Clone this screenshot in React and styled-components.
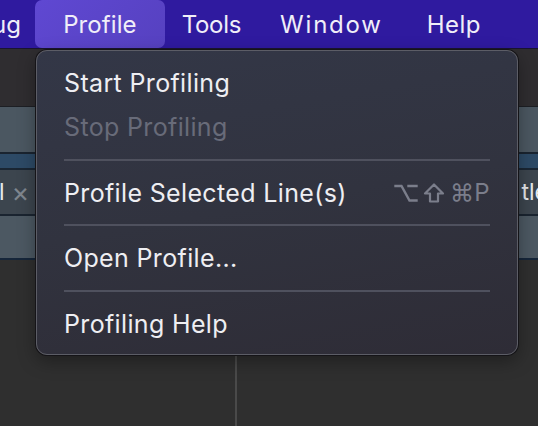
import React from "react";
import styled, { createGlobalStyle } from "styled-components";

const Global = createGlobalStyle`
  html, body { margin: 0; padding: 0; background: #2f2f2f; }
  body { width: 538px; height: 426px; overflow: hidden; font-family: Inter, "Noto Sans", sans-serif; -webkit-font-smoothing: antialiased; }
`;

const Screen = styled.div`
  position: relative;
  width: 538px;
  height: 426px;
  overflow: hidden;
  display: flex;
  flex-direction: column;
  background: #2f2f2f;
`;

const MenuBar = styled.div`
  height: 48px;
  flex: none;
  background: #2f1a9f;
  display: flex;
  align-items: stretch;
  border-bottom: 1px solid #1a1530;
`;

const MenuTitle = styled.div`
  display: flex;
  align-items: center;
  margin-right: ${p => p.$gap}px;
  padding: 0 ${p => (p.$active ? 28 : 0)}px;
  border-radius: 7px;
  background: ${p => (p.$active ? "linear-gradient(135deg, #5f48d2, #5641c0)" : "transparent")};
  color: #f0eef8;
  font-size: 24px;
  letter-spacing: ${p => p.$ls || 0.1}px;
  white-space: nowrap;
`;

const Toolbar = styled.div`
  height: 57px;
  flex: none;
  background: #2f2d30;
  border-bottom: 1px solid #1d1f24;
`;

const Band = styled.div`
  height: ${p => p.$h}px;
  flex: none;
  background: ${p => p.$bg};
  border-bottom: ${p => p.$line}px solid ${p => p.$lc || "#1a2430"};
  display: flex;
  align-items: center;
  justify-content: space-between;
  color: #e6e8ec;
  font-size: 23px;
`;

const TabEnd = styled.span`
  display: flex;
  align-items: center;
  gap: 7px;
  margin-left: -1px;
`;

const Close = styled.span`
  color: #7f868e;
  font-size: 27px;
`;

const TabStart = styled.span`
  margin-right: -10px;
`;

const Lower = styled.div`
  flex: 1;
  display: flex;
`;

const Pane = styled.div`
  width: ${p => p.$w}px;
  border-right: ${p => (p.$divider ? "2px solid #4a4a4a" : "none")};
  flex: ${p => (p.$w ? "none" : 1)};
`;

const Menu = styled.div`
  position: absolute;
  left: 36px;
  top: 50px;
  width: 482px;
  height: 305px;
  box-sizing: border-box;
  border-radius: 11px;
  background: linear-gradient(170deg, #333747 0%, #31333f 50%, #2e2c36 100%);
  border: 1.5px solid #5c5d66;
  box-shadow: 0 0 0 1px #151418, 0 6px 18px rgba(0, 0, 0, 0.35);
  padding: 10px 27px 8px 27px;
  display: flex;
  flex-direction: column;
`;

const Item = styled.div`
  height: 45px;
  display: flex;
  align-items: center;
  justify-content: space-between;
  color: ${p => (p.$disabled ? "#686b79" : "#eeeef2")};
  font-size: 25px;
  letter-spacing: 0.35px;
  white-space: nowrap;
`;

const Shortcut = styled.span`
  color: #7b7e8b;
  font-size: 24px;
  display: flex;
  align-items: center;
  gap: 5px;
`;

const Separator = styled.div`
  height: 2px;
  background: #4f515e;
  margin: 10px 0 10px;
`;

const ShiftIcon = () => (
  <svg width="22" height="22" viewBox="0 0 22 22" fill="none" stroke="#7b7e8b" strokeWidth="2.2" strokeLinejoin="round">
    <path d="M11 2.5 L20 11.5 H15 V19.5 H7 V11.5 H2 Z" />
  </svg>
);

const OptionIcon = () => (
  <svg width="24" height="22" viewBox="0 0 24 22" fill="none" stroke="#7b7e8b" strokeWidth="2.4" strokeLinecap="square">
    <path d="M1.5 4 H7.5 L15.5 18.5 H22.5 M14.5 4 H22.5" />
  </svg>
);

export default function App() {
  return (
    <Screen>
      <Global />
      <MenuBar>
        <MenuTitle $gap={14} style={{ marginLeft: -8 }}>ug</MenuTitle>
        <MenuTitle $active $gap={17}>Profile</MenuTitle>
        <MenuTitle $gap={39} $ls={-0.3}>Tools</MenuTitle>
        <MenuTitle $gap={44} $ls={1.8}>Window</MenuTitle>
        <MenuTitle $gap={0} $ls={0.4}>Help</MenuTitle>
      </MenuBar>
      <Toolbar />
      <Band $h={45} $bg="#4b5761" $line={2} />
      <Band $h={14} $bg="#2d4a66" $line={2} $lc="#1a2633" />
      <Band $h={44} $bg="#3c454e" $line={2}>
        <TabEnd>l<Close>×</Close></TabEnd>
        <TabStart>tle</TabStart>
      </Band>
      <Band $h={42} $bg="#4c5862" $line={2} $lc="#16263a" />
      <Lower>
        <Pane $w={235} $divider />
        <Pane />
      </Lower>
      <Menu>
        <Item>Start Profiling</Item>
        <Item $disabled>Stop Profiling</Item>
        <Separator />
        <Item>
          Profile Selected Line(s)
          <Shortcut><OptionIcon /><ShiftIcon />⌘P</Shortcut>
        </Item>
        <Separator />
        <Item>Open Profile...</Item>
        <Separator />
        <Item>Profiling Help</Item>
      </Menu>
    </Screen>
  );
}
